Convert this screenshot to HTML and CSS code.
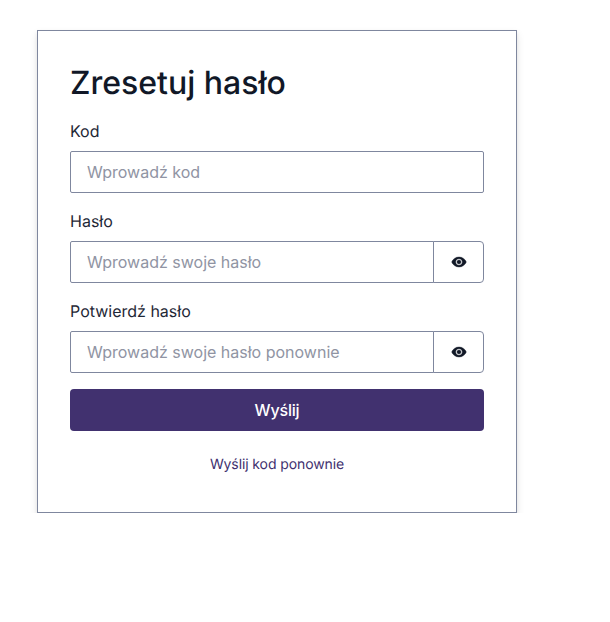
FILE: index.html
```html
<!DOCTYPE html>
<html lang="pl">
<head>
<meta charset="utf-8">
<title>Zresetuj hasło</title>
<link rel="stylesheet" href="styles.css">
</head>
<body>
<form class="card">
  <h1 class="title">Zresetuj hasło</h1>
  <div class="field">
    <label class="label" for="code">Kod</label>
    <input class="input" id="code" type="text" placeholder="Wprowadź kod">
  </div>
  <div class="field">
    <label class="label" for="pw">Hasło</label>
    <div class="group">
      <input class="input joined" id="pw" type="password" placeholder="Wprowadź swoje hasło">
      <button class="eye" type="button" aria-label="Pokaż hasło">
        <svg class="eye-icon" viewBox="0 0 24 24" width="16" height="16"><path d="M12 4.5C7 4.5 2.73 7.61 1 12c1.73 4.39 6 7.5 11 7.5s9.27-3.11 11-7.5c-1.73-4.39-6-7.5-11-7.5zM12 17c-2.76 0-5-2.24-5-5s2.24-5 5-5 5 2.24 5 5-2.24 5-5 5zm0-8c-1.66 0-3 1.34-3 3s1.34 3 3 3 3-1.34 3-3-1.34-3-3-3z"/></svg>
      </button>
    </div>
  </div>
  <div class="field">
    <label class="label" for="pw2">Potwierdź hasło</label>
    <div class="group">
      <input class="input joined" id="pw2" type="password" placeholder="Wprowadź swoje hasło ponownie">
      <button class="eye" type="button" aria-label="Pokaż hasło">
        <svg class="eye-icon" viewBox="0 0 24 24" width="16" height="16"><path d="M12 4.5C7 4.5 2.73 7.61 1 12c1.73 4.39 6 7.5 11 7.5s9.27-3.11 11-7.5c-1.73-4.39-6-7.5-11-7.5zM12 17c-2.76 0-5-2.24-5-5s2.24-5 5-5 5 2.24 5 5-2.24 5-5 5zm0-8c-1.66 0-3 1.34-3 3s1.34 3 3 3 3-1.34 3-3-1.34-3-3-3z"/></svg>
      </button>
    </div>
  </div>
  <button class="submit" type="submit">Wyślij</button>
  <div class="resend"><a class="link" href="#">Wyślij kod ponownie</a></div>
</form>
</body>
</html>
```

FILE: styles.css
```css
* { box-sizing: border-box; }
html, body { margin: 0; background: #fff; }
body {
  padding: 30px 0 0 37px;
  font-family: Inter, "Liberation Sans", sans-serif;
  color: #1a202c;
  text-rendering: geometricPrecision;
}
.card {
  width: 480px;
  height: 483px;
  padding: 32px;
  background: #fff;
  border: 1px solid #7f879e;
  box-shadow: 0 4px 8px 0 rgba(0,0,0,.1), 0 2px 4px 0 rgba(0,0,0,.06);
}
.title {
  margin: 0 0 16px;
  font-size: 32px;
  line-height: 40px;
  font-weight: 500;
  color: #111827;
}
.field { margin-bottom: 16px; }
.label {
  display: block;
  margin-bottom: 8px;
  font-size: 16px;
  line-height: 24px;
  color: #1f2937;
}
.input {
  display: block;
  width: 100%;
  height: 42px;
  padding: 0 16px;
  border: 1px solid #7f879e;
  border-radius: 2px;
  background: #fff;
  font: 16px/24px Inter, "Liberation Sans", sans-serif;
  color: #1f2937;
  outline: none;
}
.input::placeholder { color: #9094a3; opacity: 1; }
.group { display: flex; }
.joined { flex: 1; min-width: 0; border-radius: 2px 0 0 2px; }
.eye {
  display: flex;
  align-items: center;
  justify-content: center;
  flex: none;
  width: 51px;
  height: 42px;
  margin-left: -1px;
  padding: 0;
  border: 1px solid #7f879e;
  border-radius: 0 4px 4px 0;
  background: #fff;
  color: #111827;
}
.eye-icon {
  fill: currentColor;
  stroke: currentColor;
  stroke-width: .6;
}
.submit {
  display: block;
  width: 100%;
  height: 42px;
  border: 0;
  border-radius: 4px;
  background: #41316f;
  color: #fff;
  font: 500 16px/24px Inter, "Liberation Sans", sans-serif;
  letter-spacing: -0.2px;
}
.resend {
  display: flex;
  align-items: center;
  justify-content: center;
  height: 33px;
  margin-top: 17px;
}
.link {
  font-size: 14px;
  line-height: 20px;
  color: #41316f;
  text-decoration: none;
  letter-spacing: -0.1px;
}
```
